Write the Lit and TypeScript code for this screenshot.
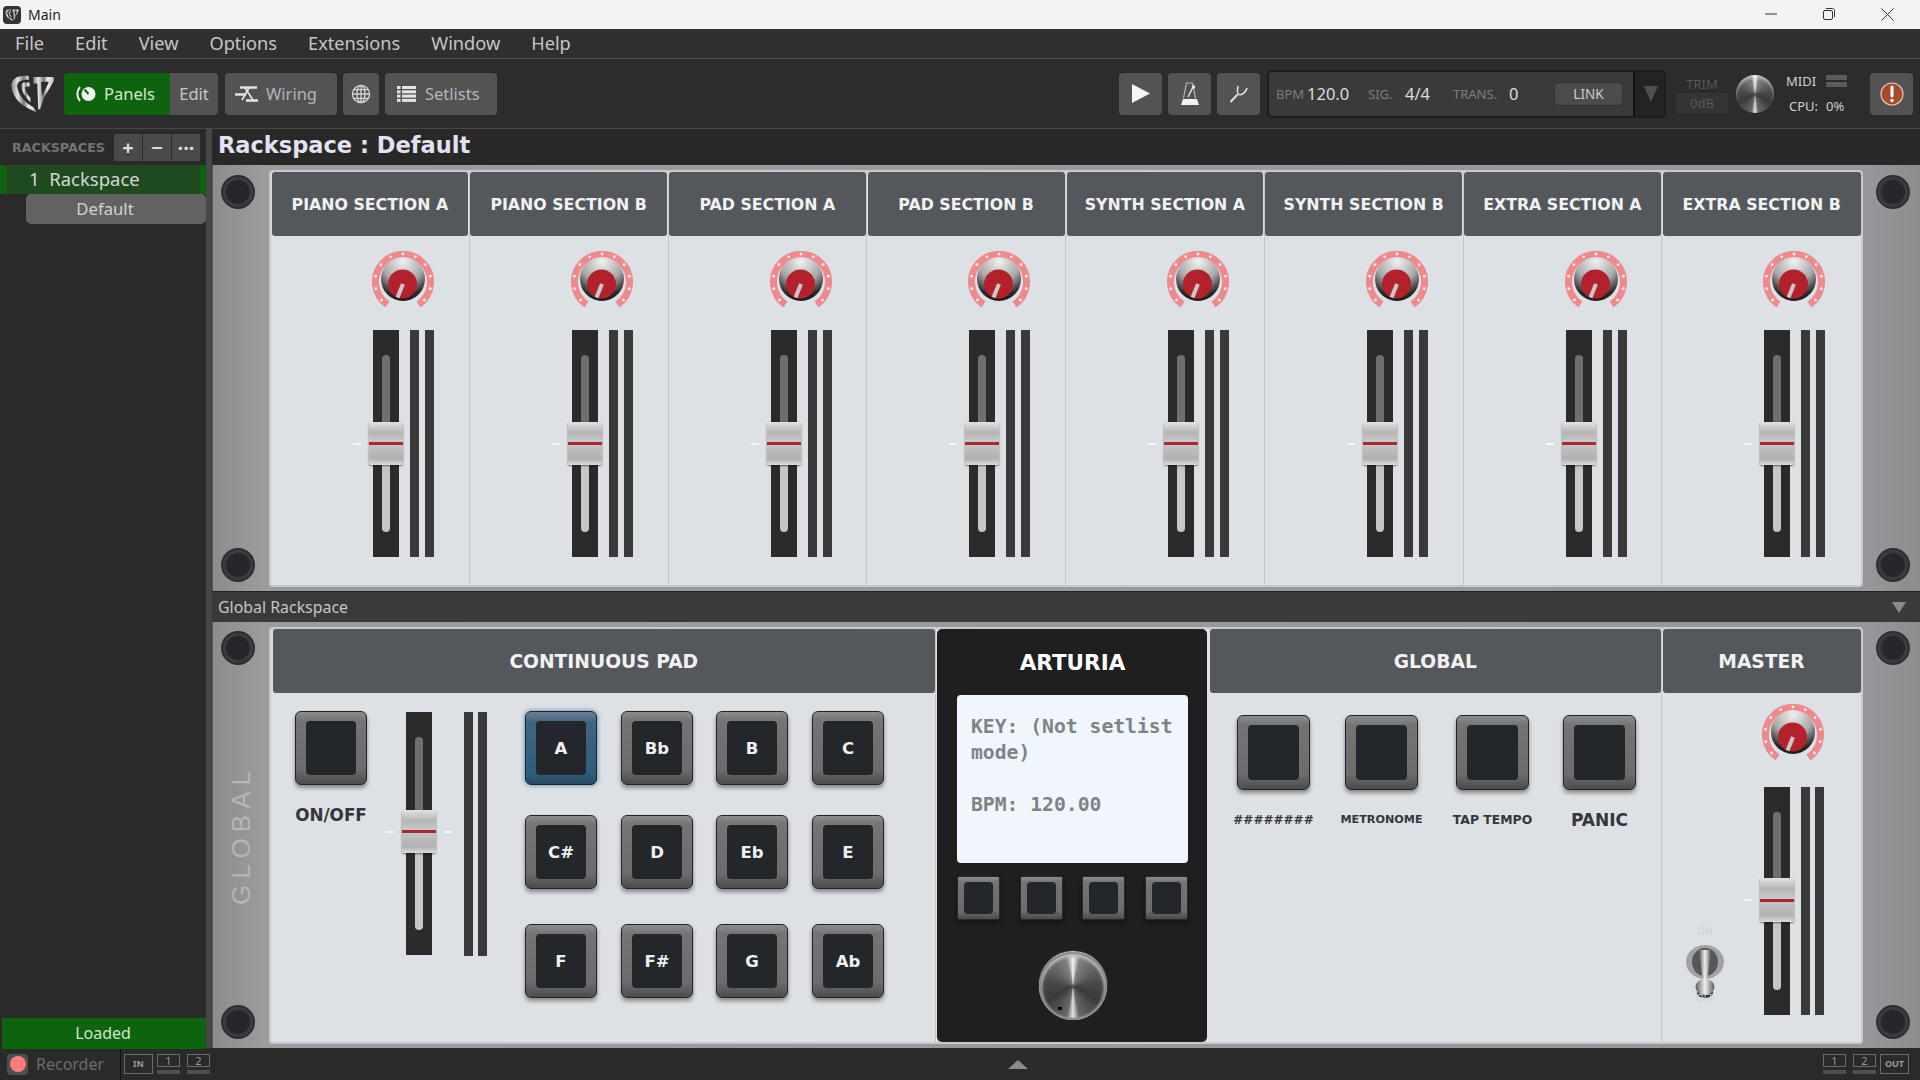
import {html, svg, css, LitElement} from 'lit';
import {customElement} from 'lit/decorators.js';
import {classMap} from 'lit/directives/class-map.js';

const SECTIONS = [
  'PIANO SECTION A',
  'PIANO SECTION B',
  'PAD SECTION A',
  'PAD SECTION B',
  'SYNTH SECTION A',
  'SYNTH SECTION B',
  'EXTRA SECTION A',
  'EXTRA SECTION B',
];
const MENUS = ['File', 'Edit', 'View', 'Options', 'Extensions', 'Window', 'Help'];
const KEYS = ['A', 'Bb', 'B', 'C', 'C#', 'D', 'Eb', 'E', 'F', 'F#', 'G', 'Ab'];

@customElement('app-root')
export class AppRoot extends LitElement {
  static styles = css`
    :host {
      display: block;
      width: 1920px;
      height: 1080px;
      overflow: hidden;
      font-family: 'Noto Sans', sans-serif;
      background: #2a2a2a;
      color: #ccc;
    }
    .app {
      display: flex;
      flex-direction: column;
      height: 1080px;
    }

    /* window chrome */
    .titlebar {
      display: flex;
      align-items: center;
      height: 29px;
      flex: none;
      background: #f3f3f3;
      color: #222;
      font-size: 14px;
      padding: 0 3px;
    }
    .appicon {
      display: flex;
      align-items: center;
      justify-content: center;
      width: 18px;
      height: 18px;
      border-radius: 4px;
      background: #333;
      margin-right: 7px;
    }
    .winctl {
      display: flex;
      margin-left: auto;
    }
    .winctl span {
      display: flex;
      justify-content: center;
      width: 58.6px;
    }
    .menubar {
      display: flex;
      align-items: center;
      height: 29px;
      flex: none;
      box-sizing: content-box;
      height: 27px;
      padding: 0 0 2px 15px;
      background: #2f2f2f;
      border-bottom: 1px solid #565656;
      gap: 31px;
      font-size: 18.2px;
      color: #c6c6c6;
    }

    /* toolbar */
    .toolbar {
      display: flex;
      align-items: center;
      height: 69px;
      flex: none;
      background: #2c2c2c;
      border-bottom: 1px solid #484848;
      padding: 0 7px 0 10px;
      box-sizing: content-box;
    }
    .logo {
      width: 45px;
      height: 38px;
      margin-right: 9px;
    }
    .tb {
      display: flex;
      align-items: center;
      justify-content: center;
      height: 42px;
      background: #535353;
      border-radius: 4px;
      font-size: 16.5px;
      color: #b4b4c0;
    }
    .tb.panels {
      justify-content: flex-start;
      gap: 8px;
      padding-left: 12px;
      box-sizing: border-box;
      width: 106px;
      background: #0e640e;
      color: #cfe6cf;
      border-radius: 4px 0 0 4px;
    }
    .tb.edit {
      width: 48px;
      border-radius: 0 4px 4px 0;
      color: #c8c8c8;
      margin-right: 7px;
    }
    .tb.wide {
      justify-content: flex-start;
      gap: 8px;
      padding-left: 10px;
      box-sizing: border-box;
      width: 112px;
      margin-right: 6px;
    }
    .tb.wide.list {
      gap: 9px;
      padding-left: 12px;
    }
    .tb.globe {
      width: 36px;
      margin-right: 6px;
    }
    .tools {
      display: flex;
      align-items: center;
      margin-left: auto;
    }
    .tb.square {
      width: 43px;
      margin-right: 6px;
    }
    .transport {
      display: flex;
      height: 48px;
      width: 399px;
      box-sizing: border-box;
      margin-left: 1px;
      border: 2px solid #1d1d1d;
      border-radius: 5px;
      background: #3a3a3a;
    }
    .readout {
      flex: 1;
      display: grid;
      grid-template-columns: 31px 61px 37px 48px 56px 45px 69px;
      align-items: center;
      padding-left: 7px;
      font-size: 16.5px;
      color: #ddd;
    }
    .dim {
      font-size: 13px;
      color: #7d7d7d;
    }
    .link {
      display: flex;
      align-items: center;
      justify-content: center;
      height: 24px;
      background: #4c4c4c;
      border-radius: 4px;
      border: 1px solid #333;
      box-sizing: border-box;
      font-size: 13.5px;
      color: #ccc;
    }
    .drop {
      display: flex;
      align-items: center;
      justify-content: center;
      width: 31px;
      padding-left: 3px;
      background: #232323;
      border-left: 2px solid #111;
      box-sizing: border-box;
    }
    .trim {
      display: flex;
      flex-direction: column;
      align-items: center;
      width: 52px;
      margin-left: 10px;
      font-size: 13px;
      color: #585858;
    }
    .trim b {
      font-weight: 400;
      line-height: 20px;
    }
    .trim span {
      width: 52px;
      height: 20px;
      line-height: 20px;
      text-align: center;
      background: #343434;
      margin-top: -1px;
    }
    .metal {
      position: relative;
      border-radius: 50%;
      background: conic-gradient(
        #f4f4f4 0deg,
        #808080 14deg,
        #4a4a4a 80deg,
        #3a3a3a 120deg,
        #666 168deg,
        #e4e4e4 180deg,
        #666 192deg,
        #3a3a3a 240deg,
        #4a4a4a 280deg,
        #808080 346deg,
        #f4f4f4 360deg
      );
    }
    .metal.small {
      width: 38px;
      height: 38px;
      margin: 0 12px 0 8px;
      box-shadow: inset 0 3px 3px rgba(255, 255, 255, 0.45);
    }
    .metal.big {
      width: 68px;
      height: 68px;
      margin-top: 32px;
      box-shadow:
        inset 0 0 0 2px #8a8a8a,
        inset 0 2px 3px 3px #bbb,
        0 -1px 1px #ddd;
    }
    .metal.big::after {
      content: '';
      position: absolute;
      left: 19px;
      top: 55px;
      width: 4px;
      height: 3px;
      background: #000;
    }
    .stats {
      display: grid;
      grid-template-columns: 40px 21px;
      grid-template-rows: 25px 25px;
      align-items: center;
      width: 61px;
      margin-right: 23px;
      font-size: 13px;
      color: #d0d0d0;
    }
    .stats .cpu {
      padding-left: 3px;
      white-space: nowrap;
    }
    .midibars {
      display: flex;
      flex-direction: column;
      gap: 2px;
      justify-self: end;
    }
    .midibars i {
      display: block;
      width: 21px;
      height: 5px;
      background: #5c5c5c;
    }
    .tb.alert {
      width: 43px;
      margin: 0;
    }

    /* work area */
    .body {
      flex: 1;
      display: flex;
      min-height: 0;
    }
    .sidebar {
      width: 206px;
      flex: none;
      display: flex;
      flex-direction: column;
      background: #2a2a2a;
      border-right: 6px solid #474747;
      box-sizing: content-box;
    }
    .sidehead {
      display: flex;
      align-items: center;
      justify-content: space-between;
      height: 36px;
      padding: 0 6px 0 12px;
    }
    .sidehead b {
      font-family: 'DejaVu Sans', sans-serif;
      font-size: 12.7px;
      color: #747474;
    }
    .sidebtns {
      display: flex;
      gap: 1px;
    }
    .sidebtns span {
      display: flex;
      align-items: center;
      justify-content: center;
      width: 28px;
      height: 27px;
      background: #4a4a4a;
      font-size: 20px;
      font-weight: 700;
      color: #ddd;
    }
    .rackrow {
      height: 29px;
      line-height: 27px;
      padding-left: 29px;
      font-size: 18.5px;
      color: #d6d6d6;
      background: linear-gradient(
        to right,
        #0e640e 6px,
        #1e4a1e 6px,
        #1e4a1e 200px,
        #0e640e 200px
      );
    }
    .variation {
      height: 30px;
      line-height: 30px;
      margin-left: 26px;
      padding-right: 22px;
      text-align: center;
      font-size: 16.7px;
      background: #626262;
      border-radius: 5px;
      color: #d2d2d2;
    }
    .loaded {
      position: relative;
      z-index: 1;
      height: 31px;
      line-height: 31px;
      margin: auto 0 -1px 2px;
      padding-right: 2px;
      text-align: center;
      font-size: 16px;
      background: #0e640e;
      color: #cfe6cf;
    }
    .main {
      flex: 1;
      display: flex;
      flex-direction: column;
      min-width: 0;
    }
    .rackname {
      height: 36px;
      line-height: 33px;
      flex: none;
      padding-left: 6px;
      font-family: 'DejaVu Sans', sans-serif;
      font-weight: 700;
      font-size: 22.5px;
      color: #e2e2f0;
      background: #282828;
    }
    .rack {
      display: flex;
      height: 426px;
      flex: none;
      background: linear-gradient(to right, #8b8c8e, #9b9c9e 3%, #96979a 97%, #8b8c8e);
      border-left: 1px solid #555;
      box-sizing: border-box;
    }
    .rackside {
      width: 56px;
      flex: none;
      display: flex;
      flex-direction: column;
      align-items: center;
      justify-content: space-between;
      padding: 9px 6px 9px 0;
      box-sizing: border-box;
    }
    .rack.first .rackside {
      padding-top: 10px;
    }
    .rackside.right {
      width: 57px;
      padding-left: 2px;
      padding-right: 0;
    }
    .screw {
      width: 34px;
      height: 34px;
      box-sizing: border-box;
      border-radius: 50%;
      background: radial-gradient(circle, #25272a 0 52%, #3a3c3f 62%, #4a4c4f 100%);
      border: 2px solid #2c2e30;
    }
    .vertical {
      writing-mode: vertical-rl;
      transform: rotate(180deg);
      margin-left: 6px;
      font-family: 'Liberation Sans', sans-serif;
      font-size: 26px;
      letter-spacing: 6px;
      color: #b4b5b8;
    }
    .panel {
      flex: 1;
      display: grid;
      margin: 5px 0 4px;
      background: #dde0e4;
      border: 2px solid #c6c9cd;
      border-radius: 4px;
      min-width: 0;
    }
    .panel.strips {
      grid-template-columns: repeat(8, 1fr);
    }
    .panel.global {
      grid-template-columns: 665px 272px 454px 1fr;
    }
    .section {
      display: flex;
      flex-direction: column;
      min-width: 0;
      border-right: 1px solid #c3c6ca;
    }
    .section:last-child {
      border-right: none;
    }
    .head {
      display: flex;
      align-items: center;
      justify-content: center;
      height: 64px;
      flex: none;
      margin: 0 0.5px;
      background: #54585c;
      border-radius: 3px;
      font-family: 'DejaVu Sans', sans-serif;
      font-weight: 700;
      font-size: 15.8px;
      color: #f2f2f2;
    }
    .head.large {
      padding-top: 1px;
      box-sizing: border-box;
      font-size: 18.7px;
    }
    .strip {
      display: flex;
      flex-direction: column;
      padding: 15px 0 0 101px;
    }
    .strip svg {
      display: block;
    }
    .channel {
      display: flex;
      gap: 11px;
      padding-left: 1px;
      margin-top: 17px;
    }
    .track {
      position: relative;
      width: 26px;
      background: #2b2b2b;
      flex: none;
    }
    .slot {
      position: absolute;
      left: 9px;
      width: 8px;
      top: 25px;
      bottom: 25px;
      border-radius: 4px;
    }
    .cap {
      position: absolute;
      left: -4px;
      width: 34px;
      box-sizing: border-box;
      border-radius: 2px;
      background: linear-gradient(
        #e2e2e2 0,
        #b4b4b4 25%,
        #cccccc 48%,
        #a5a5a5 49%,
        #a5a5a5 52%,
        #c4c4c4 53%,
        #b0b0b0 85%,
        #dcdcdc 100%
      );
      box-shadow: 0 1px 2px rgba(0, 0, 0, 0.5);
    }
    .cap::after {
      content: '';
      position: absolute;
      left: 0;
      right: 0;
      top: calc(50% - 1.5px);
      height: 3px;
      background: #a82a2e;
    }
    .tick {
      position: absolute;
      width: 8px;
      height: 2px;
      background: #f5f6f8;
    }
    .meters {
      display: flex;
      gap: 6px;
    }
    .meters i {
      display: block;
      width: 9px;
      background: #3a3a3a;
    }

    /* pads and buttons */
    .pad {
      display: flex;
      width: 72px;
      height: 74px;
      padding: 9px 10px;
      box-sizing: border-box;
      border: 1px solid #232323;
      border-radius: 6px;
      background: linear-gradient(#8d8d8d, #747474 12%, #6c6c6c 80%, #4c4c4c);
      box-shadow: 0 3px 4px rgba(0, 0, 0, 0.4);
    }
    .pad.tall {
      width: 73px;
      height: 75px;
    }
    .pad.active {
      background: linear-gradient(#6b8194, #3f6480 15%, #2f5d7d 85%, #28475f);
      box-shadow: 0 0 5px #3f7fb0;
    }
    .pad span {
      flex: 1;
      display: flex;
      align-items: center;
      justify-content: center;
      background: #23262a;
      border-radius: 4px;
      font-family: 'DejaVu Sans', sans-serif;
      font-weight: 700;
      font-size: 16.5px;
      color: #f0f0f0;
    }
    .pad.mini {
      width: 43px;
      height: 44px;
      padding: 5px 6px;
      border-radius: 2px;
      border-color: #2a2a2a;
    }
    .keyboard {
      display: flex;
      padding: 18px 0 0 24px;
    }
    .onoff {
      display: flex;
      flex-direction: column;
      align-items: center;
      width: 72px;
    }
    .lbl {
      font-family: 'DejaVu Sans', sans-serif;
      font-weight: 700;
      color: #33363a;
      white-space: nowrap;
    }
    .onoff .lbl {
      font-size: 16.8px;
      margin-top: 20px;
    }
    .keyfader {
      display: flex;
      gap: 32px;
      margin: 1px 0 0 39px;
      height: 243px;
    }
    .keyfader .meters {
      gap: 5px;
    }
    .keys {
      display: grid;
      grid-template-columns: 96px 95px 96px 72px;
      grid-template-rows: 104px 109px 74px;
      margin-left: 38px;
    }

    /* arturia */
    .arturia {
      display: flex;
      flex-direction: column;
      align-items: center;
      margin: 0 1px;
      padding: 0 19px 0 20px;
      background: #1f1f1f;
      border-radius: 5px;
      color: #fff;
    }
    .arturia h2 {
      display: flex;
      align-items: center;
      justify-content: center;
      height: 66px;
      margin: 0;
      font-family: 'DejaVu Sans', sans-serif;
      font-size: 21.5px;
    }
    .screen {
      width: 100%;
      height: 168px;
      box-sizing: border-box;
      padding: 19px 8px 0 14px;
      background: #f0f6fc;
      border-radius: 4px;
      font-family: 'DejaVu Sans Mono', monospace;
      font-weight: 700;
      font-size: 19.7px;
      line-height: 26px;
      color: #7f8386;
      white-space: pre-wrap;
    }
    .softkeys {
      display: flex;
      justify-content: space-between;
      width: 100%;
      margin-top: 13px;
    }

    /* global section */
    .globalbtns {
      display: grid;
      grid-template-columns: 108px 111px 107px 72px;
      padding: 22px 0 0 29px;
    }
    .cell {
      display: flex;
      flex-direction: column;
      align-items: center;
      width: 73px;
    }
    .cell .lbl {
      height: 20px;
      line-height: 20px;
      margin-top: 20px;
      font-size: 12px;
    }
    .cell .lbl.metronome {
      font-size: 11.2px;
    }
    .cell .lbl.tap {
      font-size: 12.4px;
    }
    .cell .lbl.panic {
      font-size: 17px;
    }
    .master {
      display: flex;
      padding-left: 23px;
    }
    .toggle {
      display: flex;
      flex-direction: column;
      align-items: center;
      width: 40px;
      padding-top: 232px;
      font-size: 10px;
      color: #cdd0d4;
    }
    .toggle span {
      height: 13px;
      line-height: 13px;
    }
    .toggle svg {
      display: block;
      margin: 7px 0 -7px;
    }
    .masterstrip {
      display: flex;
      flex-direction: column;
      padding: 11px 0 0 37px;
    }
    .masterstrip .channel {
      margin-top: 21px;
      padding-left: 2px;
    }
    .masterstrip .meters {
      gap: 5px;
    }
    .globalbar {
      display: flex;
      align-items: center;
      justify-content: space-between;
      height: 31px;
      flex: none;
      padding: 0 14px 0 6px;
      background: #3a3a3a;
      border-top: 1px solid #222;
      box-sizing: border-box;
      font-size: 15.9px;
      color: #c6c6c6;
    }

    /* status line */
    .status {
      display: flex;
      align-items: center;
      height: 32px;
      flex: none;
      padding: 0 11px 0 7px;
      background: #2a2a2a;
    }
    .rec {
      display: flex;
      align-items: center;
      justify-content: center;
      width: 21px;
      height: 21px;
      background: #4f4f4f;
      border-radius: 4px;
      margin-right: 8px;
    }
    .rec i {
      width: 16px;
      height: 16px;
      border-radius: 50%;
      background: #fd7b7b;
    }
    .recname {
      width: 84px;
      font-size: 16px;
      color: #6c6c6c;
      border-right: 1px solid #111;
      height: 32px;
      line-height: 32px;
    }
    .ports {
      display: flex;
      gap: 7px;
      margin-left: 3px;
    }
    .ports .portbox {
      margin-right: -3px;
    }
    .ports.out {
      margin-left: auto;
    }
    .ports.out .portbox {
      margin: 0 0 0 -3px;
    }
    .port {
      display: flex;
      flex-direction: column;
      gap: 3px;
      width: 23px;
    }
    .port b {
      display: block;
      height: 13px;
      line-height: 12px;
      box-sizing: border-box;
      border: 1px solid #6c6c6c;
      text-align: center;
      font-weight: 400;
      font-size: 11px;
      color: #999;
    }
    .port i {
      display: block;
      height: 4px;
      background: #4f4f4f;
    }
    .portbox {
      width: 29px;
      height: 20px;
      line-height: 18px;
      box-sizing: border-box;
      border: 1px solid #6c6c6c;
      text-align: center;
      font-size: 9px;
      font-weight: 700;
      color: #999;
    }
    .up {
      margin-left: 798px;
    }
  `;

  private logo(w: number, h: number) {
    return html`<svg width=${w} height=${h} viewBox="0 0 46 40" class=${w > 30 ? 'logo' : ''}>
      <defs>
        <linearGradient id="chrome" x1="0" x2="1" y1="0" y2="0">
          <stop offset="0" stop-color="#8a8a8a" />
          <stop offset="0.25" stop-color="#e4e4e4" />
          <stop offset="0.5" stop-color="#777" />
          <stop offset="0.7" stop-color="#eee" />
          <stop offset="1" stop-color="#bbb" />
        </linearGradient>
      </defs>
      <path
        fill="url(#chrome)"
        d="M19 1C7 0 0 4 1 13C3 26 13 34 27 39L24 34C15 29 8 21 7 13C6 7 11 5 19 5Z"
      />
      <path
        fill="url(#chrome)"
        d="M20 8L14 8C11 8 11 12 12 16C14 21 17 25 21 29L21 24C18 21 16 18 15.5 14.5C15 12 16 12 20 12Z"
      />
      <path
        fill="url(#chrome)"
        fill-rule="evenodd"
        d="M24 2L43 2C46 2 46 4 45 7L35 24L31 36L29 36L28 9L24 9ZM32 8L33 22L40 8C40 7 39.5 7 39 7L33 7Z"
      />
    </svg>`;
  }

  private redKnob() {
    return html`<svg width="62" height="62" viewBox="0 0 62 62">
      <defs>
        <radialGradient id="dome" cx="0.5" cy="0.1" r="0.95">
          <stop offset="0" stop-color="#f0f0f0" />
          <stop offset="0.5" stop-color="#a8a8a8" />
          <stop offset="0.82" stop-color="#2a2a2a" />
          <stop offset="1" stop-color="#111" />
        </radialGradient>
      </defs>
      <path
        d="M15.5 53.5A27.5 27.5 0 1 1 46.5 53.5"
        fill="none"
        stroke="#ee8a8e"
        stroke-width="7"
      />
      <circle cx="31" cy="28" r="22" fill="url(#dome)" />
      ${[-130, -104, -78, -52, -26, 0, 26, 52, 78, 104, 130].map((deg) => {
        const a = (deg * Math.PI) / 180;
        return svg`<circle
          cx=${31 + 28 * Math.sin(a)}
          cy=${31 - 28 * Math.cos(a)}
          r="1.4"
          fill="#fdeeee"
        />`;
      })}
      <circle cx="30.5" cy="33" r="14.5" fill="#b4212a" />
      <path d="M31 33L25.5 46.5" stroke="#c8c8c8" stroke-width="4" />
    </svg>`;
  }

  // top/height of the track in px, cap position measured from the track top
  private fader(height: number, capTop: number, capHeight: number, both = false) {
    const mark = capTop + capHeight / 2 - 1;
    const split = ((capTop - 25) / (height - 50)) * 100;
    return html`<div class="track" style="height:${height}px">
      <div
        class="slot"
        style="background:linear-gradient(#6f6f6f ${split}%, #c6c6c6 ${split}%)"
      ></div>
      <div class="tick" style="left:-20px;top:${mark}px"></div>
      ${both ? html`<div class="tick" style="left:38px;top:${mark}px"></div>` : ''}
      <div class="cap" style="top:${capTop}px;height:${capHeight}px"></div>
    </div>`;
  }

  private meters(height: number) {
    return html`<div class="meters" style="height:${height}px"><i></i><i></i></div>`;
  }

  private pad(label = '', extra: Record<string, boolean> = {}) {
    return html`<div class=${classMap({pad: true, ...extra})}><span>${label}</span></div>`;
  }

  private renderToolbar() {
    return html`<div class="toolbar">
      ${this.logo(45, 38)}
      <div class="tb panels">
        <svg width="20" height="18" viewBox="0 0 20 18">
          <path d="M4 2C0.5 6 0.5 12 4 16" fill="none" stroke="#e8f2e8" stroke-width="2" />
          <circle cx="12.5" cy="9" r="7" fill="#f0f6f0" />
          <path d="M12.5 9L8.5 4.5" stroke="#0e640e" stroke-width="2" />
        </svg>
        Panels
      </div>
      <div class="tb edit">Edit</div>
      <div class="tb wide">
        <svg width="23" height="18" viewBox="0 0 23 18" fill="none" stroke="#e4e4e4">
          <path d="M5 2.5H22M0 9.5H11M11 15.5H23" stroke-width="2.6" />
          <path d="M14 3L7 15M10 3L18 15" stroke-width="1.6" />
        </svg>
        Wiring
      </div>
      <div class="tb globe">
        <svg width="20" height="20" viewBox="0 0 20 20" fill="none" stroke="#d4d4d4" stroke-width="1.3">
          <circle cx="10" cy="10" r="8.6" />
          <ellipse cx="10" cy="10" rx="4" ry="8.6" />
          <path d="M10 1.4V18.6M1.4 10H18.6M2.6 5.6H17.4M2.6 14.4H17.4" />
        </svg>
      </div>
      <div class="tb wide list">
        <svg width="19" height="16" viewBox="0 0 19 16" fill="#e4e4e4">
          <rect x="0" y="0" width="3.5" height="3" />
          <rect x="5" y="0" width="14" height="3" />
          <rect x="0" y="4.3" width="3.5" height="3" />
          <rect x="5" y="4.3" width="14" height="3" />
          <rect x="0" y="8.6" width="3.5" height="3" />
          <rect x="5" y="8.6" width="14" height="3" />
          <rect x="0" y="12.9" width="3.5" height="3" />
          <rect x="5" y="12.9" width="14" height="3" />
        </svg>
        Setlists
      </div>
      <div class="tools">
        <div class="tb square">
          <svg width="18" height="19" viewBox="0 0 18 19"><path d="M0 0L18 9.5L0 19Z" fill="#f4f4f4" /></svg>
        </div>
        <div class="tb square">
          <svg width="18" height="23" viewBox="0 0 18 23">
            <path d="M0 23L2 17H16L18 23Z" fill="#f2f2f2" />
            <path d="M2.5 16L5.5 1H11.5L14.5 16" fill="none" stroke="#b8b8b8" stroke-width="1.2" />
            <path d="M7 15L13 3" stroke="#e8e8e8" stroke-width="1.4" />
            <circle cx="12.5" cy="5" r="1.6" fill="#eee" />
          </svg>
        </div>
        <div class="tb square">
          <svg width="20" height="19" viewBox="0 0 20 19" fill="none" stroke="#e0e0e0">
            <path d="M1.5 18L8.5 10.5" stroke-width="2" />
            <path d="M9 2C8 7 8.5 10 10 10.5C13 11.5 17 8 18 4" stroke-width="1.6" />
          </svg>
        </div>
        <div class="transport">
          <div class="readout">
            <span class="dim">BPM</span>
            <span>120.0</span>
            <span class="dim">SIG.</span>
            <span>4/4</span>
            <span class="dim">TRANS.</span>
            <span>0</span>
            <span class="link">LINK</span>
          </div>
          <div class="drop">
            <svg width="14" height="16" viewBox="0 0 14 16"><path d="M0 0H14L7 16Z" fill="#505050" /></svg>
          </div>
        </div>
        <div class="trim"><b>TRIM</b><span>0dB</span></div>
        <div class="metal small"></div>
        <div class="stats">
          <span>MIDI</span>
          <span class="midibars"><i></i><i></i></span>
          <span class="cpu">CPU:</span>
          <span>0%</span>
        </div>
        <div class="tb alert">
          <svg width="24" height="24" viewBox="0 0 24 24">
            <circle cx="12" cy="12" r="11" fill="#a24c2c" stroke="#e4c4b4" stroke-width="1.2" />
            <path d="M12 5V14" stroke="#fff" stroke-width="3" stroke-linecap="round" />
            <circle cx="12" cy="18.5" r="1.7" fill="#fff" />
          </svg>
        </div>
      </div>
    </div>`;
  }

  private renderSidebar() {
    return html`<div class="sidebar">
      <div class="sidehead">
        <b>RACKSPACES</b>
        <div class="sidebtns"><span>+</span><span>−</span><span>···</span></div>
      </div>
      <div class="rackrow">1&nbsp; Rackspace</div>
      <div class="variation">Default</div>
      <div class="loaded">Loaded</div>
    </div>`;
  }

  private renderTopRack() {
    return html`<div class="rack first">
      <div class="rackside"><div class="screw"></div><div class="screw"></div></div>
      <div class="panel strips">
        ${SECTIONS.map(
          (name) => html`<div class="section">
            <div class="head">${name}</div>
            <div class="strip">
              ${this.redKnob()}
              <div class="channel">${this.fader(227, 92, 43)}${this.meters(227)}</div>
            </div>
          </div>`
        )}
      </div>
      <div class="rackside right"><div class="screw"></div><div class="screw"></div></div>
    </div>`;
  }

  private renderGlobalRack() {
    const labelClass = (label: string) =>
      classMap({
        lbl: true,
        panic: label === 'PANIC',
        metronome: label === 'METRONOME',
        tap: label === 'TAP TEMPO',
      });
    return html`<div class="rack">
      <div class="rackside">
        <div class="screw"></div>
        <div class="vertical">GLOBAL</div>
        <div class="screw"></div>
      </div>
      <div class="panel global">
        <div class="section">
          <div class="head large" style="margin-left:2px">CONTINUOUS PAD</div>
          <div class="keyboard">
            <div class="onoff">
              ${this.pad()}
              <div class="lbl">ON/OFF</div>
            </div>
            <div class="keyfader">${this.fader(243, 98, 43, true)}${this.meters(244)}</div>
            <div class="keys">
              ${KEYS.map((k, i) => this.pad(k, {active: i === 0}))}
            </div>
          </div>
        </div>
        <div class="arturia">
          <h2>ARTURIA</h2>
          <div class="screen">KEY: (Not setlist
mode)

BPM: 120.00</div>
          <div class="softkeys">
            ${[0, 1, 2, 3].map(() => this.pad('', {mini: true}))}
          </div>
          <div class="metal big"></div>
        </div>
        <div class="section">
          <div class="head large" style="margin-left:2px">GLOBAL</div>
          <div class="globalbtns">
            ${['########', 'METRONOME', 'TAP TEMPO', 'PANIC'].map(
              (label) => html`<div class="cell">
                ${this.pad('', {tall: true})}
                <div class=${labelClass(label)}>${label}</div>
              </div>`
            )}
          </div>
        </div>
        <div class="section">
          <div class="head large">MASTER</div>
          <div class="master">
            <div class="toggle">
              <span>ON</span>
              <svg width="40" height="54" viewBox="0 0 40 54">
                <defs>
                  <linearGradient id="plate" x1="0" x2="1" y1="0" y2="0">
                    <stop offset="0" stop-color="#5a5a5a" />
                    <stop offset="0.5" stop-color="#f0f0f0" />
                    <stop offset="1" stop-color="#5a5a5a" />
                  </linearGradient>
                </defs>
                <ellipse cx="20" cy="17" rx="19" ry="17" fill="#a0a2a4" />
                <ellipse cx="20" cy="17" rx="13" ry="14" fill="#55575a" />
                <path d="M14 5H26L22.5 34H17.5Z" fill="url(#plate)" />
                <ellipse cx="20" cy="48" rx="8" ry="5" fill="#2b2b2b" />
                <ellipse cx="20" cy="42" rx="9.5" ry="8" fill="url(#plate)" />
              </svg>
              <span>OFF</span>
            </div>
            <div class="masterstrip">
              ${this.redKnob()}
              <div class="channel">${this.fader(228, 91, 44)}${this.meters(228)}</div>
            </div>
          </div>
        </div>
      </div>
      <div class="rackside right"><div class="screw"></div><div class="screw"></div></div>
    </div>`;
  }

  private renderStatus() {
    const port = (n: string) => html`<div class="port"><b>${n}</b><i></i></div>`;
    return html`<div class="status">
      <div class="rec"><i></i></div>
      <div class="recname">Recorder</div>
      <div class="ports">
        <div class="portbox">IN</div>
        ${port('1')}${port('2')}
      </div>
      <svg class="up" width="20" height="9" viewBox="0 0 20 9"><path d="M0 9L10 0L20 9Z" fill="#8a8a8a" /></svg>
      <div class="ports out">
        ${port('1')}${port('2')}
        <div class="portbox">OUT</div>
      </div>
    </div>`;
  }

  render() {
    return html`<div class="app">
      <div class="titlebar">
        <span class="appicon">${this.logo(14, 12)}</span>
        Main
        <div class="winctl">
          <span>
            <svg width="12" height="12" viewBox="0 0 12 12"><path d="M0 6H12" stroke="#333" /></svg>
          </span>
          <span>
            <svg width="12" height="12" viewBox="0 0 12 12" fill="none" stroke="#333">
              <rect x="0.5" y="2.5" width="9" height="9" rx="1.5" />
              <path d="M3 0.5H9.5C10.6 0.5 11.5 1.4 11.5 2.5V9" />
            </svg>
          </span>
          <span>
            <svg width="13" height="13" viewBox="0 0 13 13"><path d="M0.5 0.5L12.5 12.5M12.5 0.5L0.5 12.5" stroke="#333" /></svg>
          </span>
        </div>
      </div>
      <div class="menubar">${MENUS.map((m) => html`<span>${m}</span>`)}</div>
      ${this.renderToolbar()}
      <div class="body">
        ${this.renderSidebar()}
        <div class="main">
          <div class="rackname">Rackspace : Default</div>
          ${this.renderTopRack()}
          <div class="globalbar">
            Global Rackspace
            <svg width="14" height="11" viewBox="0 0 14 11"><path d="M0 0H14L7 11Z" fill="#8a8a8a" /></svg>
          </div>
          ${this.renderGlobalRack()}
        </div>
      </div>
      ${this.renderStatus()}
    </div>`;
  }
}
